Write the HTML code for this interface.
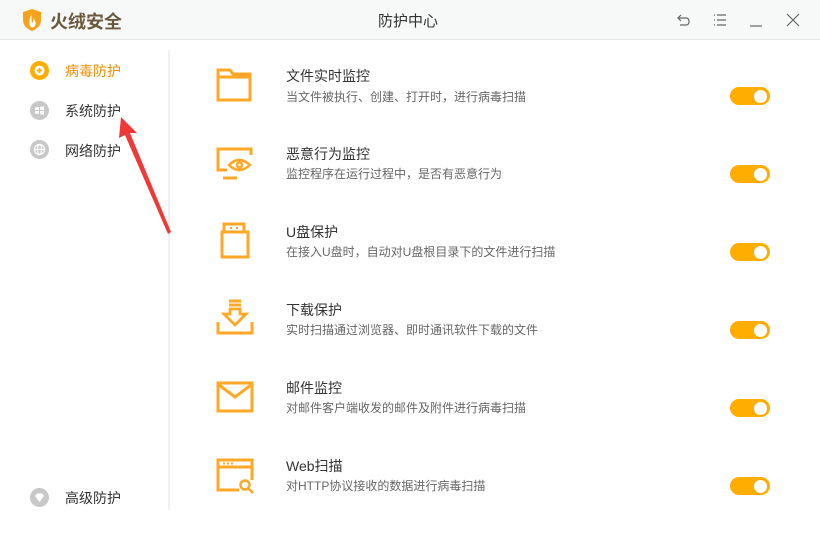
<html><head><style>
body{margin:0;width:820px;height:540px;background:#fff;font-family:"Liberation Sans","Noto Sans CJK SC",sans-serif;position:relative;overflow:hidden}
.top{position:absolute;left:0;top:0;width:820px;height:39px;background:#f7f8f8;border-bottom:1px solid #e8e8e8}
.abs{position:absolute}
.nav{position:absolute;left:65px;font-size:14px;color:#333}
.ni{position:absolute;left:30px}
.t{position:absolute;left:286px;font-size:14px;color:#333}
.s{position:absolute;left:286px;font-size:12px;color:#666}
.tg{position:absolute;left:730px;width:40px;height:18px;border-radius:9px;background:#ffad00}
.tg:after{content:"";position:absolute;right:3px;top:2.5px;width:13px;height:13px;border-radius:50%;background:#fff}
svg.ic{position:absolute;left:215px;width:40px;height:40px}
</style></head><body>
<div class="top"></div>
<svg class="abs" style="left:22px;top:9px" width="20" height="22" viewBox="0 0 20 22"><path d="M1 3 L10 0 L19 3 L19 11 Q19 18 10 22 Q1 18 1 11Z" fill="#f7a21b"/><path d="M10 5 Q6 11 8 17 Q10 20 13 17 Q15 13 11 9 Q12 13 10 14 Q9 10 10 5Z" fill="#fff"/></svg>
<div class="abs" style="left:50px;top:8px;font-size:18px;font-weight:bold;color:#6b5a3e">火绒安全</div>
<div class="abs" style="left:378px;top:10px;font-size:15px;color:#333">防护中心</div>
<svg class="abs" style="left:676px;top:12px" width="16" height="16" viewBox="0 0 16 16" fill="none" stroke="#666" stroke-width="1.2"><path d="M5 3 L2 6 L5 9 M2 6 H10 Q13 6 13 9.5 Q13 13 10 13 H4"/></svg>
<svg class="abs" style="left:712px;top:12px" width="16" height="16" viewBox="0 0 16 16" stroke="#666" stroke-width="1.2"><path d="M2 3h1M2 8h1M2 13h1M5 3h9M5 8h9M5 13h9"/></svg>
<svg class="abs" style="left:748px;top:12px" width="16" height="16" viewBox="0 0 16 16" stroke="#666" stroke-width="1.2"><path d="M2 14H14"/></svg>
<svg class="abs" style="left:785px;top:12px" width="16" height="16" viewBox="0 0 16 16" stroke="#666" stroke-width="1.2"><path d="M2 2L14 14M14 2L2 14"/></svg>

<svg class="ni" style="top:61px" width="19" height="19" viewBox="0 0 19 19"><circle cx="9.5" cy="9.5" r="9.5" fill="#ffad00"/><circle cx="9.5" cy="9.5" r="5" fill="#fff"/><path d="M7 9.5H12M9.5 7V12" stroke="#ffad00" stroke-width="1.8"/></svg>
<div class="nav" style="top:61px;color:#f08c00">病毒防护</div>
<svg class="ni" style="top:101px" width="19" height="19" viewBox="0 0 19 19"><circle cx="9.5" cy="9.5" r="9.5" fill="#c8c8c8"/><path d="M5 6.5L9 6V9H5ZM10 5.9L14 5.3V9H10ZM5 10H9V13L5 12.5ZM10 10H14V13.7L10 13.1Z" fill="#fff"/></svg>
<div class="nav" style="top:101px">系统防护</div>
<svg class="ni" style="top:140px" width="19" height="19" viewBox="0 0 19 19"><circle cx="9.5" cy="9.5" r="9.5" fill="#c8c8c8"/><g fill="none" stroke="#fff" stroke-width="1.2"><circle cx="9.5" cy="9.5" r="5"/><ellipse cx="9.5" cy="9.5" rx="2" ry="5"/><path d="M4.5 9.5H14.5"/></g></svg>
<div class="nav" style="top:141px">网络防护</div>
<svg class="ni" style="top:488px" width="19" height="19" viewBox="0 0 19 19"><circle cx="9.5" cy="9.5" r="9.5" fill="#c8c8c8"/><path d="M5 8L7 5.5H12L14 8L9.5 14Z" fill="#fff"/></svg>
<div class="nav" style="top:488px">高级防护</div>
<div class="abs" style="left:168px;top:50px;width:2px;height:460px;background:#f0f0f0"></div>
<svg class="abs" style="left:0;top:0" width="200" height="260"><polygon points="121,117 137,133 130,133 171,232 168,234 125,135 119,138" fill="#f03838"/></svg>

<svg class="ic" style="top:65px" viewBox="0 0 40 40" fill="none" stroke="#ffa726" stroke-width="3"><path d="M3 5H15L18 9H35V35H3Z M3 12H35"/></svg>
<div class="t" style="top:66px">文件实时监控</div><div class="s" style="top:88px">当文件被执行、创建、打开时，进行病毒扫描</div><div class="tg" style="top:87px"></div>

<svg class="ic" style="top:143px" viewBox="0 0 40 40" fill="none" stroke="#ffa726" stroke-width="3"><path d="M36 12V6H3V27H12 M8 35H22"/><path d="M14 22Q24 12 35 22Q24 32 14 22Z" stroke-width="2.5"/><circle cx="24.5" cy="22" r="2.5" stroke-width="2.5"/></svg>
<div class="t" style="top:144px">恶意行为监控</div><div class="s" style="top:165px">监控程序在运行过程中，是否有恶意行为</div><div class="tg" style="top:165px"></div>

<svg class="ic" style="top:221px" viewBox="0 0 40 40" fill="none" stroke="#ffa726" stroke-width="3"><path d="M9 3H29V11H9Z M7 11H33V36H7Z"/><path d="M15 7h2M21 7h2" stroke-width="2"/></svg>
<div class="t" style="top:222px">U盘保护</div><div class="s" style="top:243px">在接入U盘时，自动对U盘根目录下的文件进行扫描</div><div class="tg" style="top:243px"></div>

<svg class="ic" style="top:298px" viewBox="0 0 40 40" fill="none" stroke="#ffa726" stroke-width="3"><path d="M3 24V35H37V24 M14 3H26M14 7H26"/><path d="M15 11V16H9L20 27L31 16H25V11Z" stroke-width="2.8"/></svg>
<div class="t" style="top:300px">下载保护</div><div class="s" style="top:321px">实时扫描通过浏览器、即时通讯软件下载的文件</div><div class="tg" style="top:321px"></div>

<svg class="ic" style="top:377px" viewBox="0 0 40 40" fill="none" stroke="#ffa726" stroke-width="3"><path d="M3 6H37V34H3Z M4 8L20 20L36 8"/></svg>
<div class="t" style="top:378px">邮件监控</div><div class="s" style="top:399px">对邮件客户端收发的邮件及附件进行病毒扫描</div><div class="tg" style="top:399px"></div>

<svg class="ic" style="top:455px" viewBox="0 0 40 40" fill="none" stroke="#ffa726" stroke-width="3"><path d="M24 35H3V5H37V25 M3 12H37"/><path d="M8 8.5h2M12 8.5h2M16 8.5h2" stroke-width="2"/><circle cx="30" cy="30" r="4.5" stroke-width="2.5"/><path d="M33 33L38 38" stroke-width="2.5"/></svg>
<div class="t" style="top:456px">Web扫描</div><div class="s" style="top:477px">对HTTP协议接收的数据进行病毒扫描</div><div class="tg" style="top:477px"></div>
</body></html>
